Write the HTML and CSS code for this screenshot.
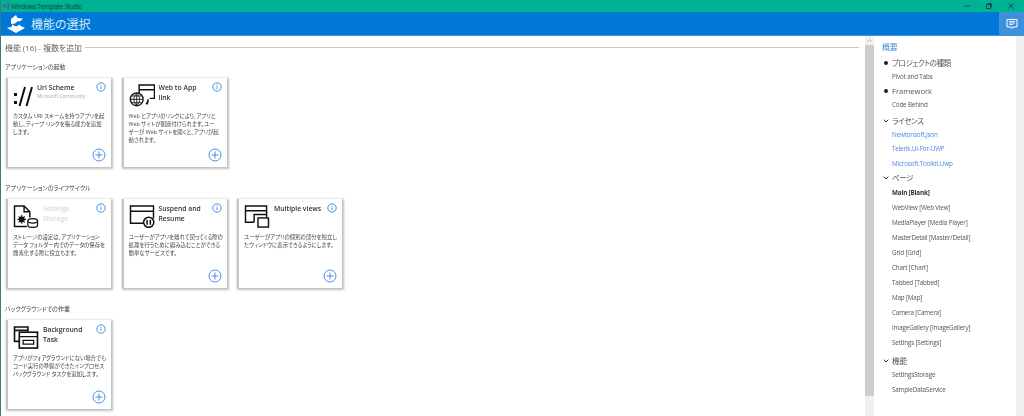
FILE: index.html
```html
<!DOCTYPE html>
<html lang="ja">
<head>
<meta charset="utf-8">
<title>Windows Template Studio</title>
<link rel="stylesheet" href="styles.css">
</head>
<body>
<div class="app">
  <div class="titlebar">
    <svg class="vs" viewBox="0 0 8 8"><path d="M1 2.500 3 4 1 5.500M3 4l3.500-3v6zM3 4l3.500 3" fill="none" stroke="#7b3fa8" stroke-width="1"/></svg>
    <span class="wintitle">Windows Template Studio</span>
    <div class="controls">
      <svg viewBox="0 0 8 8"><path d="M1.500 4h5" stroke="#245" stroke-width="1"/></svg>
      <svg viewBox="0 0 8 8"><path d="M1.500 2.500h4v4h-4zM3 2.500V1.500h3.500v3.500h-1" fill="none" stroke="#245" stroke-width="1"/></svg>
      <svg viewBox="0 0 8 8"><path d="M1.500 1.500l5 5M6.500 1.500l-5 5" stroke="#245" stroke-width="1"/></svg>
    </div>
  </div>
  <header class="header">
    <svg class="logo" viewBox="0 0 20 20"><path d="M1 14l9 5 9-5-5-2.500v-1l-4 2-4-2 0 2zM5 10V5l5-4 1.500 3L17 4.500l-3 3L12 7l-3 2.500z" fill="#fff"/></svg>
    <h1 class="pagetitle">機能の選択</h1>
    <div class="chatbtn">
      <svg viewBox="0 0 12 12"><path d="M1 1.500h10v7.500H7L6 10.500 5 9H1z" fill="none" stroke="#fff" stroke-width="1"/><path d="M3 3.500h6M3 5h6M3 6.500h4" stroke="#fff" stroke-width=".8"/></svg>
    </div>
  </header>
  <div class="body">
    <main class="main">
      <div class="maintitle"><span>機能 (16) - 複数を追加</span><i class="rule"></i></div>

      <h2 class="group">アプリケーションの起動</h2>
      <div class="cards">
        <article class="card">
          <div class="cardhead">
            <svg class="icon narrow" viewBox="0 0 20 23"><path d="M1 9h3v3H1zM1 17h3v3H1z" fill="#111"/><path d="M12 3 6.500 22M19 3l-5.500 19" stroke="#111" stroke-width="2" fill="none"/></svg>
            <div><h3 class="cardtitle">Uri Scheme</h3><p class="author">Microsoft Community</p></div>
          </div>
          <p class="desc">カスタム URI スキームを持つアプリを起<br>動し、ディープ リンクを張る能力を追加<br>します。</p>
          <svg class="info" viewBox="0 0 10 10"><circle cx="5" cy="5" r="4.200"/><path d="M5 4.500v2.500M5 2.700v1"/></svg>
          <svg class="add" viewBox="0 0 14 14"><circle cx="7" cy="7" r="6"/><path d="M7 3.500v7M3.500 7h7"/></svg>
        </article>
        <article class="card">
          <div class="cardhead">
            <svg class="icon" viewBox="0 0 26 24"><path d="M10 12V1h16v14h-5M10 6h16" fill="none" stroke="#111" stroke-width="1.500"/><circle cx="7.500" cy="16" r="6.700" fill="#fff" stroke="#111" stroke-width="1.400"/><path d="M1 16h13M7.500 9.500v13M2.500 12.500h10M2.500 19.500h10M7.500 9.500c-4 4-4 9 0 13M7.500 9.500c4 4 4 9 0 13" fill="none" stroke="#111" stroke-width=".9"/><path d="M19.500 16l-1 4.500-1.500-.5" fill="none" stroke="#111" stroke-width="1.700"/></svg>
            <h3 class="cardtitle">Web to App<br>link</h3>
          </div>
          <p class="desc">Web とアプリのリンクにより、アプリと<br>Web サイトが関連付けられます。ユー<br>ザーが Web サイトを開くと、アプリが起<br>動されます。</p>
          <svg class="info" viewBox="0 0 10 10"><circle cx="5" cy="5" r="4.200"/><path d="M5 4.500v2.500M5 2.700v1"/></svg>
          <svg class="add" viewBox="0 0 14 14"><circle cx="7" cy="7" r="6"/><path d="M7 3.500v7M3.500 7h7"/></svg>
        </article>
      </div>

      <h2 class="group">アプリケーションのライフサイクル</h2>
      <div class="cards">
        <article class="card">
          <div class="cardhead">
            <svg class="icon" viewBox="0 0 26 24"><path d="M14 22.500H1V1h10l6 6v6M11 1v6h6" fill="none" stroke="#111" stroke-width="1.500"/><circle cx="8.500" cy="15" r="3" fill="#111"/><circle cx="8.500" cy="15" r="1.100" fill="#fff"/><path d="M8.500 10.500v9M4 15h9M5.300 11.800l6.400 6.400M11.700 11.800l-6.400 6.400" stroke="#111" stroke-width="1.100"/><path d="M15 16.500v5c0 2.500 10 2.500 10 0v-5" fill="#fff" stroke="#111" stroke-width="1.300"/><ellipse cx="20" cy="16.500" rx="5" ry="2.300" fill="#fff" stroke="#111" stroke-width="1.300"/></svg>
            <h3 class="cardtitle off">Settings<br>Storage</h3>
          </div>
          <p class="desc">ストレージの設定は、アプリケーション<br>データ フォルダー内でのデータの保存を<br>簡素化する際に役立ちます。</p>
          <svg class="info" viewBox="0 0 10 10"><circle cx="5" cy="5" r="4.200"/><path d="M5 4.500v2.500M5 2.700v1"/></svg>
        </article>
        <article class="card">
          <div class="cardhead">
            <svg class="icon" viewBox="0 0 26 24"><path d="M15 19H1V1h24v13M1 6.500h24" fill="none" stroke="#111" stroke-width="1.500"/><circle cx="20" cy="18" r="5.300" fill="#fff" stroke="#111" stroke-width="1.600"/><path d="M18.300 15.500v5M21.700 15.500v5" stroke="#111" stroke-width="1.600"/></svg>
            <h3 class="cardtitle">Suspend and<br>Resume</h3>
          </div>
          <p class="desc">ユーザーがアプリを離れて戻ってくる際の<br>処理を行うために組み込むことができる<br>簡単なサービスです。</p>
          <svg class="info" viewBox="0 0 10 10"><circle cx="5" cy="5" r="4.200"/><path d="M5 4.500v2.500M5 2.700v1"/></svg>
          <svg class="add" viewBox="0 0 14 14"><circle cx="7" cy="7" r="6"/><path d="M7 3.500v7M3.500 7h7"/></svg>
        </article>
        <article class="card">
          <div class="cardhead">
            <svg class="icon" viewBox="0 0 26 24"><path d="M10 18H1V1h22v9M1 6h22" fill="none" stroke="#111" stroke-width="1.500"/><path d="M10 18v-8h13v3" fill="none" stroke="#111" stroke-width="1.500"/><rect x="14" y="13.500" width="11" height="9.500" fill="#fff" stroke="#111" stroke-width="1.500"/></svg>
            <h3 class="cardtitle">Multiple views</h3>
          </div>
          <p class="desc">ユーザーがアプリの個別の部分を独立し<br>たウィンドウに表示できるようにします。</p>
          <svg class="info" viewBox="0 0 10 10"><circle cx="5" cy="5" r="4.200"/><path d="M5 4.500v2.500M5 2.700v1"/></svg>
          <svg class="add" viewBox="0 0 14 14"><circle cx="7" cy="7" r="6"/><path d="M7 3.500v7M3.500 7h7"/></svg>
        </article>
      </div>

      <h2 class="group">バックグラウンドでの作業</h2>
      <div class="cards">
        <article class="card">
          <div class="cardhead">
            <svg class="icon" viewBox="0 0 26 24"><path d="M6 16H1V1h14v5M1 4.500h14" fill="none" stroke="#111" stroke-width="1.700"/><rect x="6" y="6.500" width="19" height="16.500" fill="#fff" stroke="#111" stroke-width="1.700"/><path d="M6 11h19M10 15h11v4H10z" fill="none" stroke="#111" stroke-width="1.300"/></svg>
            <h3 class="cardtitle">Background<br>Task</h3>
          </div>
          <p class="desc">アプリがフォアグラウンドにない場合でも<br>コード実行の準備ができたインプロセス<br>バックグラウンド タスクを追加します。</p>
          <svg class="info" viewBox="0 0 10 10"><circle cx="5" cy="5" r="4.200"/><path d="M5 4.500v2.500M5 2.700v1"/></svg>
          <svg class="add" viewBox="0 0 14 14"><circle cx="7" cy="7" r="6"/><path d="M7 3.500v7M3.500 7h7"/></svg>
        </article>
      </div>
    </main>

    <div class="scroll">
      <svg class="scrollup" viewBox="0 0 9 9"><path d="M2.500 5.500 4.500 3.500l2 2" fill="none" stroke="#aaa" stroke-width="1"/></svg>
      <div class="thumb"></div>
    </div>

    <aside class="panel">
      <h2 class="ptitle">概要</h2>
      <div class="phead kana"><i class="bullet"></i>プロジェクトの種類</div>
      <div class="pitem">Pivot and Tabs</div>
      <div class="phead tight"><i class="bullet"></i>Framework</div>
      <div class="pitem">Code Behind</div>
      <div class="phead kana"><svg class="chev" viewBox="0 0 6 4"><path d="M.7.700 3 3 5.300.7" fill="none" stroke="#333" stroke-width="1"/></svg>ライセンス</div>
      <div class="pitem link">Newtonsoft.Json</div>
      <div class="pitem link">Telerik.UI-For-UWP</div>
      <div class="pitem link">Microsoft.Toolkit.Uwp</div>
      <div class="phead tight kana"><svg class="chev" viewBox="0 0 6 4"><path d="M.7.700 3 3 5.300.7" fill="none" stroke="#333" stroke-width="1"/></svg>ページ</div>
      <div class="pitem page strong">Main [Blank]</div>
      <div class="pitem page">WebView [Web View]</div>
      <div class="pitem page">MediaPlayer [Media Player]</div>
      <div class="pitem page">MasterDetail [Master/Detail]</div>
      <div class="pitem page">Grid [Grid]</div>
      <div class="pitem page">Chart [Chart]</div>
      <div class="pitem page">Tabbed [Tabbed]</div>
      <div class="pitem page">Map [Map]</div>
      <div class="pitem page">Camera [Camera]</div>
      <div class="pitem page">ImageGallery [ImageGallery]</div>
      <div class="pitem page">Settings [Settings]</div>
      <div class="phead features"><svg class="chev" viewBox="0 0 6 4"><path d="M.7.700 3 3 5.300.7" fill="none" stroke="#333" stroke-width="1"/></svg>機能</div>
      <div class="pitem">SettingsStorage</div>
      <div class="pitem">SampleDataService</div>
    </aside>
    <div class="sidetrack"></div>
  </div>
</div>
</body>
</html>
```
FILE: styles.css
```css
* { box-sizing: border-box; }
html, body { margin: 0; padding: 0; background: #fff; overflow: hidden; }
body {
  font-family: "Open Sans", "Noto Sans CJK JP", sans-serif;
  font-feature-settings: "palt";
  color: #444;
}
h1, h2, h3, p { margin: 0; font-weight: 400; }
i { font-style: normal; }

.app {
  width: 1024px;
  height: 416px;
  display: flex;
  flex-direction: column;
  border-left: 1px solid #2f7f7c;
  overflow: hidden;
  filter: blur(0.35px);
}

.titlebar {
  height: 12px;
  flex: none;
  background: #00b294;
  display: flex;
  align-items: center;
  padding-left: 1px;
  gap: 1px;
}
.vs { width: 8px; height: 8px; }
.wintitle { font-size: 6.200px; letter-spacing: -.17px; color: #123f3d; }
.controls { margin-left: auto; display: flex; gap: 14px; padding-right: 9px; }
.controls svg { width: 8px; height: 8px; display: block; }

.header {
  height: 24px;
  flex: none;
  background: #0078d7;
  display: flex;
  align-items: center;
  padding-left: 5px;
  border-bottom: 1px solid #3d95df;
}
.logo { width: 20px; height: 20px; }
.pagetitle { margin-left: 5px; font-size: 12px; color: #d6e9f8; }
.chatbtn {
  margin-left: auto;
  width: 25px;
  height: 24px;
  background: #3f90dc;
  display: flex;
  align-items: center;
  justify-content: center;
}
.chatbtn svg { width: 12px; height: 12px; }

.body { flex: 1; display: flex; min-height: 0; }

.main { width: 864px; flex: none; padding-left: 4px; }
.maintitle {
  height: 22px;
  display: flex;
  align-items: center;
  gap: 3px;
  font-size: 7.900px;
  color: #666;
  padding-right: 6px;
}
.rule { flex: 1; height: 1px; background: #c8c8c8; }
.group { font-size: 6px; line-height: 9px; padding-top: 1px; color: #444; margin-top: 4px; }
.cards { display: flex; gap: 10.500px; margin: 6px 0 16px 1px; }

.card {
  position: relative;
  width: 105px;
  height: 89px;
  background: #fff;
  border-left: 2px solid #c4c4c4;
  box-shadow: 1px 1px 2px 1px rgba(0, 0, 0, .25);
  padding: 5px 5px 0 5px;
}
.cardhead { display: flex; height: 30px; gap: 4px; align-items: flex-start; }
.icon { width: 26px; height: 23px; flex: none; margin-top: 1px; }
.icon.narrow { width: 20px; }
.cardtitle { font-size: 6.800px; line-height: 9.500px; font-weight: 600; color: #333; }
.cardtitle.off { color: #d8d8d8; }
.author { font-size: 4.800px; line-height: 6px; color: #aaa; }
.desc { font-size: 5.400px; line-height: 7.900px; color: #444; white-space: nowrap; }
.info, .add { position: absolute; fill: none; stroke: #4a90e2; }
.info { width: 10px; height: 10px; top: 3.500px; right: 5px; stroke-width: 1; }
.add { width: 14px; height: 14px; right: 5px; bottom: 5px; stroke-width: 1; }

.scroll { width: 9px; flex: none; background: #f0f0f0; display: flex; flex-direction: column; }
.scrollup { width: 9px; height: 9px; flex: none; }
.thumb { height: 351px; background: #cdcdcd; }

.panel { width: 142px; flex: none; padding: 5px 0 0 8px; font-size: 6.300px; letter-spacing: -.17px; }
.ptitle { font-size: 8px; line-height: 12px; color: #3f8be0; margin-bottom: 2.500px; }
.phead {
  position: relative;
  height: 14px;
  line-height: 14px;
  font-size: 7.600px;
  letter-spacing: 0;
  color: #555;
  padding-left: 10px;
  margin-top: 1px;
}
.phead.kana { letter-spacing: -.5px; }
.phead.tight { margin-top: 0; }
.phead.features { margin-top: 3.500px; }
.bullet {
  position: absolute;
  left: 2px;
  top: 5px;
  width: 4px;
  height: 4px;
  border-radius: 50%;
  background: #222;
}
.chev { position: absolute; left: 1px; top: 5px; width: 6px; height: 4px; }
.pitem { height: 14.600px; line-height: 14.600px; padding-left: 10px; color: #555; }
.pitem.page { height: 15px; line-height: 15px; }
.link { color: #4a8be0; }
.strong { font-weight: 700; color: #333; }

.sidetrack { flex: 1; background: #f0f0f0; }
```
